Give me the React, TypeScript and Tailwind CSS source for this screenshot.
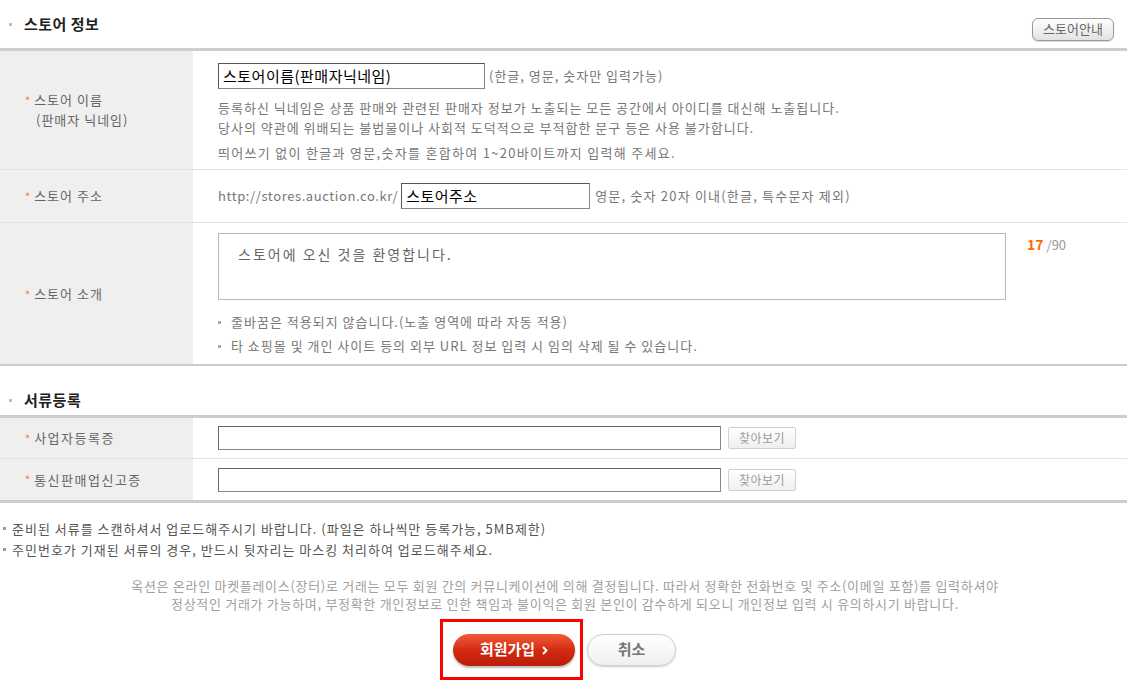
const FONT = "font-['Noto_Sans_CJK_KR','Noto_Sans',sans-serif]";

function SectionTitle({ title, right, className }: { title: string; right?: React.ReactNode; className: string }) {
  return (
    <div className={`flex w-[1127px] items-center pl-[9px] ${className}`}>
      <span className="mr-[12px] inline-block h-[3px] w-[3px] bg-[#bdbdbd]" />
      <span className="text-[15px] font-bold tracking-[0.5px] text-[#222]">{title}</span>
      <div className="ml-auto">{right}</div>
    </div>
  );
}

function Star() {
  return <span className="mr-[4px] text-[11px] tracking-normal text-[#f37a2b]">*</span>;
}

function Label({ lines }: { lines: string[] }) {
  return (
    <div className="flex w-[193px] shrink-0 items-center bg-[#efefef] pl-[25px] text-[13px] leading-[20px] tracking-[1px] text-[#666]">
      <div>
        {lines.map((l, i) => (
          <div key={l} className={i > 0 ? 'pl-[11px]' : ''}>
            {i === 0 && <Star />}
            {l}
          </div>
        ))}
      </div>
    </div>
  );
}

function Bullet({ children }: { children: React.ReactNode }) {
  return (
    <div className="flex items-center">
      <span className="mr-[10px] inline-block h-[3px] w-[3px] bg-[#aaa]" />
      <span>{children}</span>
    </div>
  );
}

function FileRow({ label, last }: { label: string; last?: boolean }) {
  return (
    <div className={`flex h-[41px] ${last ? '' : 'border-b border-[#e2e2e2]'}`}>
      <div className="flex w-[193px] shrink-0 items-center bg-[#efefef] pl-[25px] text-[13px] tracking-[1.5px] text-[#666]">
        <Star />
        {label}
      </div>
      <div className="flex items-center pl-[25px]">
        <div className="h-[24px] w-[503px] border border-[#888] border-t-[#666] border-l-[#666] bg-white" />
        <button className="ml-[7px] h-[22px] w-[68px] rounded-[2px] border border-[#d0d0d0] bg-gradient-to-b from-white to-[#efefef] text-[12px] tracking-[0.5px] text-[#999]">
          찾아보기
        </button>
      </div>
    </div>
  );
}

export default function App() {
  return (
    <div className={`min-h-[698px] w-[1130px] bg-white ${FONT}`}>
      <SectionTitle
        title="스토어 정보"
        className="h-[48px]"
        right={
          <button className="mr-[13px] mt-[10px] h-[23px] w-[82px] rounded-[6px] border border-[#9a9a9a] bg-gradient-to-b from-white to-[#e2e2e2] text-[13px] text-[#666] shadow-[0_1px_1px_rgba(0,0,0,0.15)]">
            스토어안내
          </button>
        }
      />

      <div className="w-[1127px] border-t-[3px] border-b-2 border-[#cdcdcd]">
        {/* store name */}
        <div className="flex h-[119px] border-b border-[#e2e2e2]">
          <Label lines={['스토어 이름', '(판매자 닉네임)']} />
          <div className="pl-[25px] pt-[12px] text-[13px] tracking-[1px] text-[#777]">
            <div className="flex items-center">
              <div className="flex h-[26px] w-[267px] items-center border border-[#888] border-t-[#555] border-l-[#555] px-[4px] text-[15px] tracking-[0.5px] text-black">
                스토어이름(판매자닉네임)
              </div>
              <span className="ml-[4px]">(한글, 영문, 숫자만 입력가능)</span>
            </div>
            <div className="mt-[9px] leading-[20px]">
              등록하신 닉네임은 상품 판매와 관련된 판매자 정보가 노출되는 모든 공간에서 아이디를 대신해 노출됩니다.
              <br />
              당사의 약관에 위배되는 불법물이나 사회적 도덕적으로 부적합한 문구 등은 사용 불가합니다.
            </div>
            <div className="mt-[5px] leading-[20px] tracking-[1.3px]">
              띄어쓰기 없이 한글과 영문,숫자를 혼합하여 1~20바이트까지 입력해 주세요.
            </div>
          </div>
        </div>

        {/* store url */}
        <div className="flex h-[53px] border-b border-[#e2e2e2]">
          <Label lines={['스토어 주소']} />
          <div className="flex items-center pl-[25px] text-[13px] tracking-[1px] text-[#777]">
            <span className="tracking-[0.6px]">http://stores.auction.co.kr/</span>
            <div className="ml-[3px] flex h-[26px] w-[189px] items-center border border-[#888] border-t-[#555] border-l-[#555] px-[4px] text-[15px] tracking-[0.5px] text-black">
              스토어주소
            </div>
            <span className="ml-[5px] tracking-[1.2px]">영문, 숫자 20자 이내(한글, 특수문자 제외)</span>
          </div>
        </div>

        {/* store intro */}
        <div className="flex h-[141px]">
          <Label lines={['스토어 소개']} />
          <div className="pl-[25px] pt-[10px] text-[13px] tracking-[1px] text-[#777]">
            <div className="flex">
              <div className="h-[67px] w-[788px] border border-[#b8b8b8] pl-[19px] pt-[10px] text-[14px] tracking-[2px] text-[#666]">
                스토어에 오신 것을 환영합니다.
              </div>
              <div className="ml-[21px] pt-[1px] text-[13px] tracking-normal">
                <span className="font-bold text-[14px] text-[#ff6a00]">17</span>
                <span className="ml-[3px] text-[#999]">/90</span>
              </div>
            </div>
            <div className="mt-[10px] leading-[24px]">
              <Bullet>줄바꿈은 적용되지 않습니다.(노출 영역에 따라 자동 적용)</Bullet>
              <Bullet>타 쇼핑몰 및 개인 사이트 등의 외부 URL 정보 입력 시 임의 삭제 될 수 있습니다.</Bullet>
            </div>
          </div>
        </div>
      </div>

      <SectionTitle title="서류등록" className="h-[49px] pt-[20px]" />

      <div className="w-[1127px] border-t-[3px] border-b-[3px] border-[#cdcdcd]">
        <FileRow label="사업자등록증" />
        <FileRow label="통신판매업신고증" last />
      </div>

      <div className="pt-[15px] text-[13px] leading-[21px] tracking-[1px] text-[#555]">
        <div className="flex items-center">
          <span className="ml-[3px] mr-[6px] inline-block h-[3px] w-[3px] bg-[#999]" />
          준비된 서류를 스캔하셔서 업로드해주시기 바랍니다. (파일은 하나씩만 등록가능, 5MB제한)
        </div>
        <div className="flex items-center">
          <span className="ml-[3px] mr-[6px] inline-block h-[3px] w-[3px] bg-[#999]" />
          주민번호가 기재된 서류의 경우, 반드시 뒷자리는 마스킹 처리하여 업로드해주세요.
        </div>
      </div>

      <div className="mt-[17px] text-center text-[13px] leading-[18px] tracking-[0.7px] text-[#a0a0a0]">
        옥션은 온라인 마켓플레이스(장터)로 거래는 모두 회원 간의 커뮤니케이션에 의해 결정됩니다. 따라서 정확한 전화번호 및 주소(이메일 포함)를 입력하셔야
        <br />
        정상적인 거래가 가능하며, 부정확한 개인정보로 인한 책임과 불이익은 회원 본인이 감수하게 되오니 개인정보 입력 시 유의하시기 바랍니다.
      </div>

      <div className="mt-[6px] flex items-center pl-[440px]">
        <div className="flex h-[61px] w-[143px] items-center border-[3px] border-[#ff0000] pl-[10px]">
          <button className="flex h-[32px] w-[122px] items-center justify-center gap-[7px] rounded-full bg-gradient-to-b from-[#f25a36] via-[#d42a12] to-[#b81c0a] text-[15px] font-bold text-white shadow-[0_2px_2px_rgba(0,0,0,0.25)]">
            회원가입
            <svg width="6" height="9" viewBox="0 0 6 9" className="mt-[1px]">
              <path d="M1 1l3.5 3.5L1 8" fill="none" stroke="white" strokeWidth="2" />
            </svg>
          </button>
        </div>
        <button className="ml-[4px] h-[32px] w-[89px] rounded-full border border-[#cfcfcf] bg-gradient-to-b from-white to-[#f0f0f0] text-[15px] font-bold text-[#777] shadow-[0_1px_2px_rgba(0,0,0,0.2)]">
          취소
        </button>
      </div>
    </div>
  );
}
